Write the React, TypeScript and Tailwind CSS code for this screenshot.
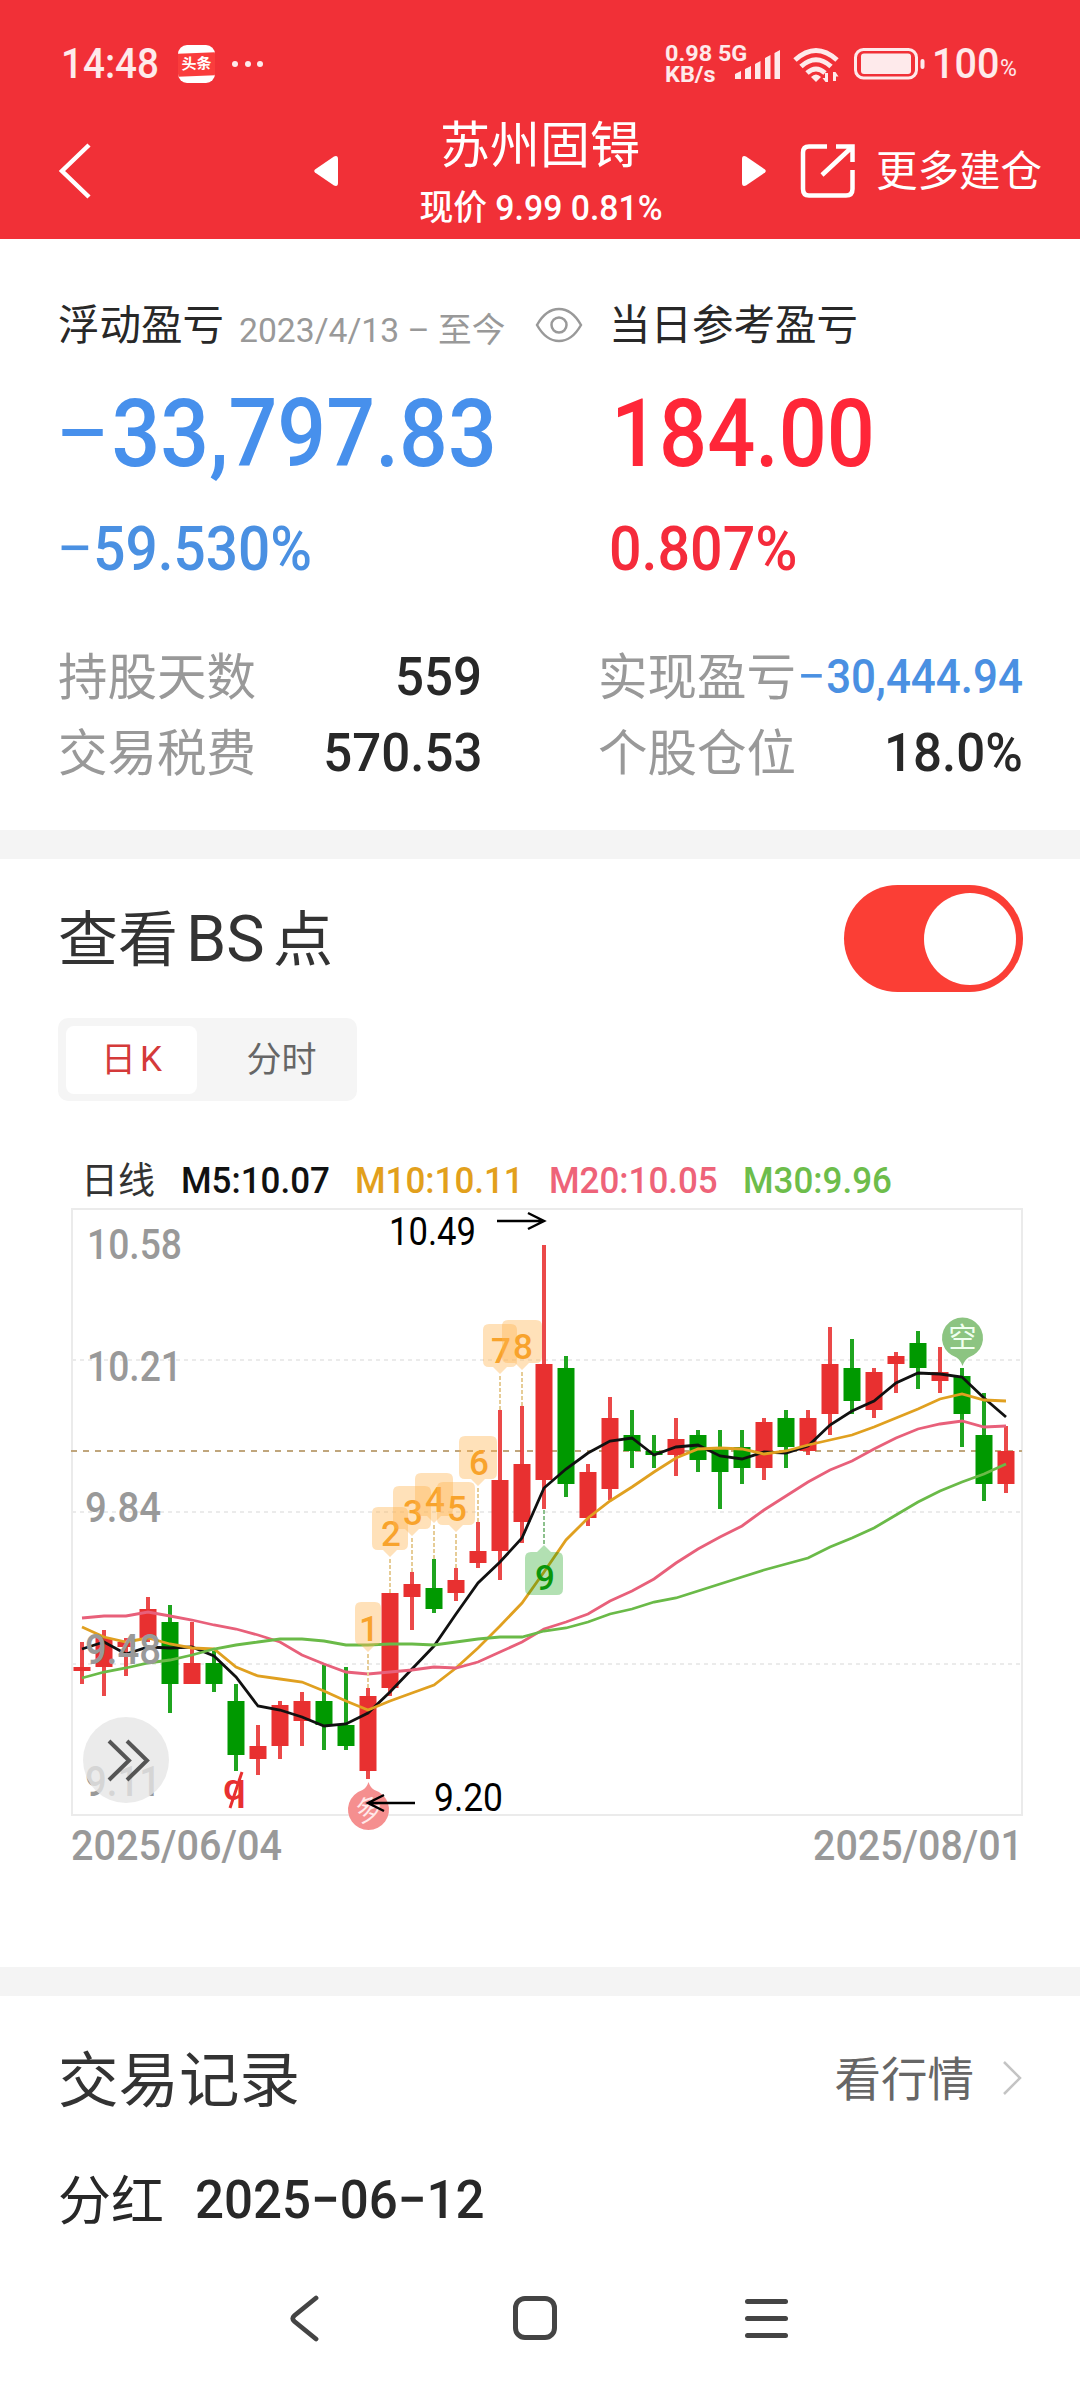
import React, { useState } from 'react';

type Candle = [number, number, number, number, number];

// [up, high, low, bodyTop, bodyBottom] in chart units
const CANDLES: Candle[] = [
  [1, 1642, 1684, 1667, 1671], [1, 1630, 1696, 1638, 1667], [1, 1638, 1676, 1642, 1647], [1, 1597, 1642, 1609, 1638],
  [0, 1605, 1713, 1622, 1684], [1, 1622, 1684, 1663, 1684], [0, 1651, 1692, 1663, 1684], [0, 1684, 1771, 1701, 1755],
  [1, 1725, 1775, 1746, 1759], [1, 1701, 1759, 1705, 1746], [1, 1692, 1746, 1701, 1721], [0, 1665, 1750, 1701, 1725],
  [0, 1667, 1750, 1725, 1746], [1, 1688, 1779, 1696, 1771], [1, 1593, 1696, 1593, 1688], [1, 1572, 1630, 1584, 1597],
  [0, 1559, 1613, 1588, 1609], [1, 1568, 1601, 1580, 1593], [1, 1522, 1568, 1551, 1563], [1, 1410, 1580, 1480, 1551],
  [1, 1406, 1543, 1464, 1522], [1, 1245, 1509, 1364, 1480], [0, 1356, 1497, 1368, 1484], [1, 1464, 1526, 1472, 1518],
  [1, 1397, 1500, 1418, 1489], [0, 1410, 1468, 1435, 1451], [0, 1435, 1468, 1451, 1455], [1, 1418, 1476, 1439, 1455],
  [0, 1430, 1472, 1435, 1460], [0, 1430, 1509, 1447, 1472], [0, 1430, 1484, 1447, 1468], [1, 1418, 1480, 1422, 1468],
  [0, 1410, 1468, 1418, 1447], [1, 1410, 1455, 1418, 1451], [1, 1327, 1435, 1364, 1414], [0, 1339, 1414, 1368, 1401],
  [1, 1368, 1418, 1372, 1410], [1, 1352, 1393, 1356, 1364], [0, 1331, 1389, 1343, 1368], [1, 1347, 1393, 1372, 1381],
  [0, 1368, 1447, 1376, 1414], [0, 1393, 1501, 1435, 1484], [1, 1426, 1493, 1451, 1484],
];

const AVERAGES = [
  {
    color: '#111111',
    values: [1649, 1642, 1654, 1647, 1648, 1647, 1656, 1677, 1706, 1710, 1717, 1726, 1724, 1713, 1692, 1669, 1646, 1614, 1583, 1562, 1538, 1488, 1469, 1453, 1441, 1438, 1455, 1447, 1445, 1456, 1459, 1452, 1453, 1446, 1425, 1411, 1401, 1383, 1373, 1374, 1377, 1398, 1417],
  },
  {
    color: '#e0a020',
    values: [1627, 1637, 1642, 1638, 1644, 1648, 1649, 1667, 1676, 1679, 1682, 1691, 1701, 1710, 1701, 1693, 1685, 1668, 1648, 1626, 1603, 1572, 1540, 1518, 1501, 1487, 1472, 1458, 1449, 1448, 1449, 1454, 1451, 1445, 1440, 1435, 1427, 1418, 1409, 1399, 1394, 1400, 1401],
  },
  {
    color: '#e8607a',
    values: [1618, 1616, 1616, 1612, 1616, 1620, 1625, 1629, 1635, 1642, 1655, 1664, 1672, 1674, 1672, 1670, 1667, 1668, 1662, 1652, 1642, 1629, 1622, 1614, 1601, 1591, 1579, 1563, 1549, 1537, 1526, 1510, 1496, 1482, 1470, 1461, 1449, 1438, 1429, 1424, 1421, 1427, 1426],
  },
  {
    color: '#6aba48',
    values: [1678, 1672, 1668, 1663, 1660, 1655, 1649, 1645, 1642, 1639, 1639, 1641, 1645, 1645, 1644, 1644, 1645, 1642, 1639, 1637, 1637, 1631, 1628, 1622, 1614, 1609, 1602, 1598, 1591, 1584, 1577, 1570, 1564, 1558, 1547, 1538, 1528, 1515, 1502, 1491, 1482, 1474, 1464],
  },
];

// label, centre index, left, width, top, end of the dashed stem
const BADGES: [string, number, number, number, number, number][] = [
  ['1', 13, 355, 26, 1602, 1688],
  ['2', 14, 372, 36, 1507, 1593],
  ['3', 15, 393, 38, 1486, 1572],
  ['4', 16, 415, 38, 1473, 1559],
  ['5', 17, 437, 38, 1482, 1568],
  ['6', 18, 459, 38, 1436, 1522],
  ['7', 19, 483, 34, 1324, 1410],
  ['8', 20, 502, 40, 1320, 1406],
];

const AXIS: [string, number, number, number][] = [
  ['10.58', 87, 1259, 95],
  ['10.21', 87, 1381, 95],
  ['9.84', 85, 1522, 76],
];

const LEGEND = [
  { text: 'M5:10.07', className: 'w-[174px] text-[#111111]' },
  { text: 'M10:10.11', className: 'w-[194px] text-[#e2a01c]' },
  { text: 'M20:10.05', className: 'w-[194px] text-[#ee6379]' },
  { text: 'M30:9.96', className: 'text-[#6dbd4b]' },
];

const cx = (i: number) => 82 + i * 22;

const Minus: React.FC = () => (
  <span className="-ml-[.04em] mr-[.09em] inline-block origin-left scale-x-[1.15] font-normal">−</span>
);

const StatusBar: React.FC = () => (
  <div className="flex h-[128px] items-center pl-[61px] text-white/90">
    <span className="w-[117px] shrink-0 whitespace-nowrap text-[42px] font-medium leading-none"><span className="inline-block origin-left scale-x-[.92]">14:48</span></span>
    <span className="flex h-[38px] w-[37px] shrink-0 flex-col justify-center overflow-hidden rounded-[9px] bg-white">
      <span className="flex h-[23px] -skew-y-2 items-center justify-center bg-[#fa3c3c] text-[15px] font-bold leading-none text-white">头条</span>
    </span>
    <span className="ml-[17px] flex gap-[6.5px]">
      <i className="size-[6px] rounded-full bg-white/90" />
      <i className="size-[6px] rounded-full bg-white/90" />
      <i className="size-[6px] rounded-full bg-white/90" />
    </span>
    <span className="ml-[402px] flex w-[70px] shrink-0 flex-col whitespace-nowrap text-[22.5px] font-bold leading-[21px]">
      <span className="origin-left scale-x-[1.04]">0.98 5G</span>
      <span className="origin-left scale-x-[1.04]">KB/s</span>
    </span>
    <svg className="h-[38px] w-[106px] shrink-0" viewBox="736 45 106 38" fill="currentColor">
      <path d="M736 74l6-3v8h-6zM746 69l6-3v13h-6zM756 64l5.500-3v18H756zM766 58l5.500-3v24H766zM775.500 53l5.500-3v29h-5.500z" />
      <g fill="none" stroke="currentColor" strokeWidth="5">
        <path d="M796 60q21-19 42 0" />
        <path d="M802 66.500q15-13.500 30 0" />
        <path d="M808 73q9-8 18 0" />
      </g>
      <path d="M812 77q5-5 10 0l-5 5z" />
      <path d="M829 73v9h-2.500l-3-4h2.500v-5zM834 81v-9h2.500l3 4.500H837V81z" />
    </svg>
    <svg className="ml-[13px] h-[38px] w-[72px] shrink-0" viewBox="855 45 72 38">
      <rect x="856.500" y="49.500" width="61" height="28.500" rx="8" fill="none" stroke="currentColor" strokeWidth="3" />
      <rect x="862" y="53.500" width="50" height="20.500" rx="3" fill="currentColor" />
      <rect x="921.500" y="59" width="4" height="10" rx="2" fill="currentColor" />
    </svg>
    <span className="ml-[6px] w-[68px] text-[42px] font-medium leading-none"><span className="inline-block origin-left scale-x-[.94]">100</span></span>
    <span className="mt-[8px] text-[23px] leading-none">%</span>
  </div>
);

const Header: React.FC = () => (
  <header className="h-[239px] bg-[#f13037] text-white">
    <StatusBar />
    <div className="flex h-[86px] items-center">
      <svg className="ml-[58px] h-[60px] w-[36px]" viewBox="0 0 36 60" fill="none" stroke="currentColor" strokeWidth="4.500">
        <path d="M31 4L4 30l27 26" />
      </svg>
      <svg className="ml-[220px] h-[30px] w-[24px]" viewBox="0 0 24 30" fill="currentColor">
        <path d="M1 13.500Q-.5 15 1 16.500L20 29.500Q24 31 24 27V3Q24-1 20 .5Z" />
      </svg>
      <div className="mt-[14px] flex w-[404px] flex-col items-center whitespace-nowrap">
        <h1 className="h-[62px] text-[50px] leading-[60px]">苏州固锝</h1>
        <p className="h-[62px] pl-[1px] text-[35px] font-medium leading-[62px]">
          <span className="inline-block scale-x-[.965]">现价 9.99 0.81%</span>
        </p>
      </div>
      <svg className="h-[30px] w-[24px]" viewBox="0 0 24 30" fill="currentColor">
        <path d="M23 13.500Q24.500 15 23 16.500L4 29.500Q0 31 0 27V3Q0-1 4 .5Z" />
      </svg>
      <svg className="ml-[33px] h-[58px] w-[58px]" viewBox="0 0 58 58" fill="none" stroke="currentColor" strokeWidth="4.500">
        <path d="M28 4.500H10Q4 4.500 4 10.500V47Q4 53.500 10 53.500H47Q53.500 53.500 53.500 47V28" />
        <path d="M37 4.500H53.500V20M52 6L23 33" />
      </svg>
      <span className="mt-[2px] ml-[19px] whitespace-nowrap text-[41.5px] leading-none">更多建仓</span>
    </div>
  </header>
);

const Stat: React.FC<{ label: string; value: React.ReactNode; className?: string }> = ({ label, value, className }) => (
  <div className="flex h-[76px] items-center whitespace-nowrap">
    <span className="mt-[3px] shrink-0 text-[49.5px] leading-none text-[#999999]">{label}</span>
    <span className="flex min-w-0 flex-1 justify-end">
      <span className={`shrink-0 origin-right leading-none font-medium ${className || 'scale-x-[.945] text-[54px] text-[#282828]'}`}>{value}</span>
    </span>
  </div>
);

const Summary: React.FC = () => (
  <section className="h-[591px] pt-[51px] pl-[58px]">
    <div className="flex h-[72px] items-center whitespace-nowrap text-[41.5px] leading-none text-[#282828]">
      <span className="w-[181px]">浮动盈亏</span>
      <span className="mt-[8px] w-[296px] text-[34px] text-[#999999]"><span className="inline-block origin-left scale-x-[.99]">2023/4/13 – 至今</span></span>
      <svg className="-mt-[3px] h-[36px] w-[48px] shrink-0" viewBox="0 0 48 36" fill="none" stroke="#999999" strokeWidth="2.500">
        <path d="M2 18Q11 2 24 2T46 18Q37 34 24 34T2 18Z" />
        <circle cx="24" cy="18" r="7.500" />
      </svg>
      <span className="ml-[26px]">当日参考盈亏</span>
    </div>
    <div className="mt-[24px] flex h-[96px] items-center whitespace-nowrap text-[94px] font-medium leading-none">
      <span className="w-[553px] text-[#4790ec]"><span className="inline-block origin-left scale-x-[.915]"><Minus />33,797.83</span></span>
      <span className="text-[#ff2638]"><span className="inline-block origin-left scale-x-[.9]">184.00</span></span>
    </div>
    <div className="mt-[31px] flex h-[72px] items-center whitespace-nowrap text-[62px] font-medium leading-none">
      <span className="w-[551px] text-[#4a90e2]"><span className="inline-block origin-left scale-x-[.915]"><Minus />59.530%</span></span>
      <span className="text-[#f52b3b]"><span className="inline-block origin-left scale-x-[.925]">0.807%</span></span>
    </div>
    <div className="mt-[54px] grid grid-cols-[424px_425px] gap-x-[116px]">
      <Stat label="持股天数" value="559" />
      <Stat label="实现盈亏" value={<><Minus />30,444.94</>} className="scale-x-[.915] text-[48px] text-[#4a90e2]" />
      <Stat label="交易税费" value="570.53" />
      <Stat label="个股仓位" value="18.0%" />
    </div>
  </section>
);

const Label: React.FC<{ x: number; y: number; w: number; text: string; fill?: string; size?: number; weight?: number }> = ({ x, y, w, text, fill = '#999999', size = 42, weight = 500 }) => (
  <text x={x} y={y} textLength={w} lengthAdjust="spacingAndGlyphs" fill={fill} fontSize={size} fontWeight={weight}>{text}</text>
);

const KLineChart: React.FC = () => (
  <svg className="block h-[670px] w-[1080px]" viewBox="0 1205 1080 670">
    <g fill="none" stroke="#ebebeb" strokeWidth="2">
      <rect x="72" y="1209" width="950" height="606" />
      <path d="M72 1360H1022M72 1512H1022M72 1664H1022" strokeDasharray="4 4" />
    </g>
    <path d="M71 1451H1022" stroke="#c0a67c" strokeWidth="2" strokeDasharray="6 6" />

    {CANDLES.map(([up, high, low, top, bottom], i) => (
      <g key={i} fill={up ? '#e83030' : '#009900'}>
        <rect x={cx(i) - 2} y={high} width="4" height={low - high} opacity=".88" />
        <rect x={cx(i) - 8.5} y={top} width="17" height={bottom - top} />
      </g>
    ))}

    {AVERAGES.map(({ color, values }) => (
      <polyline key={color} points={values.map((v, i) => `${cx(i)},${v}`).join(' ')} fill="none" stroke={color} strokeWidth="2.800" />
    ))}

    {BADGES.map(([label, i, x, w, y, end]) => (
      <g key={label}>
        <path d={`M${cx(i)} ${y + 52}V${end}`} stroke="#e6cc96" strokeWidth="2" strokeDasharray="4 2" />
        <path
          d={`M${x + 6} ${y}h${w - 12}q6 0 6 6v31q0 6-6 6H${cx(i) + 7}l-7 7l-7-7H${x + 6}q-6 0-6-6v-31q0-6 6-6z`}
          fill="#ffb450"
          fillOpacity=".4"
        />
        <text x={cx(i) + 1} y={y + 39} textAnchor="middle" fill="#f8a32c" fontSize="35" fontWeight="500">{label}</text>
      </g>
    ))}

    <path d="M544 1510V1545" stroke="#8cc08c" strokeWidth="2" strokeDasharray="4 2" />
    <path d="M531 1552h6l7-7l7 7h6q6 0 6 6v31q0 6-6 6h-26q-6 0-6-6v-31q0-6 6-6z" fill="#009900" fillOpacity=".3" />
    <text x="545" y="1590" textAnchor="middle" fill="#0a960a" fontSize="35" fontWeight="500">9</text>

    {AXIS.map(([text, x, y, w]) => <Label key={text} text={text} x={x} y={y} w={w} />)}
    <Label text="9.48" x={85} y={1664} w={76} />
    <Label text="9.11" x={85} y={1796} w={76} />

    <circle cx="126" cy="1760" r="43" fill="#e6e6e6" fillOpacity=".78" />
    <path d="M109 1741l20 19.500l-20 19.500M127 1741l20 19.500l-20 19.500" fill="none" stroke="#555555" strokeWidth="4" />

    <Label text="q" x={223} y={1800} w={23} fill="#e83030" size={37} />
    <path d="M242 1772L230 1808" stroke="#e83030" strokeWidth="3" />

    <path d="M368.500 1782q2 6 6 8a20.500 20.500 0 1 1-12 0q4-2 6-8z" fill="#f58f8f" />
    <text x="369" y="1819" textAnchor="middle" fill="#ffe9e9" fontSize="27" transform="rotate(-20 369 1810)">多</text>
    <path d="M368 1803H415M384 1795L368 1803L384 1811" fill="none" stroke="#000000" strokeWidth="2.500" />
    <Label text="9.20" x={434} y={1811} w={69} fill="#000000" size={38} weight={400} />

    <path d="M497 1221H544M528 1213L544 1221L528 1229" fill="none" stroke="#000000" strokeWidth="2.500" />
    <Label text="10.49" x={389} y={1245} w={87} fill="#000000" size={38} weight={400} />

    <path d="M962.500 1366q-2-6-6-8.500a20.500 20.500 0 1 1 12 0q-4 2.500-6 8.500z" fill="#8cc481" />
    <text x="962.500" y="1348" textAnchor="middle" fill="#f0fff0" fontSize="28">空</text>

    <Label text="2025/06/04" x={71} y={1860} w={211} />
    <Label text="2025/08/01" x={813} y={1860} w={210} />
  </svg>
);

const BsPoints: React.FC = () => {
  const [on, setOn] = useState(true);
  return (
    <section className="h-[1108px]">
      <div className="flex h-[159px] items-center justify-between pr-[57px] pl-[58px]">
        <h2 className="flex items-center whitespace-nowrap text-[60px] leading-none text-[#333333]">
          <span className="mt-[5px]">查看</span>
          <span className="mt-[2px] mr-[1px] ml-[8px] w-[86px] text-[64px]"><span className="inline-block origin-left scale-x-[1.01]">BS</span></span>
          <span className="mt-[5px]">点</span>
        </h2>
        <button onClick={() => setOn(!on)} className={`flex h-[107px] w-[179px] items-center rounded-full px-[7px] ${on ? 'justify-end bg-[#fb3e35]' : 'bg-gray-300'}`}>
          <span className="size-[92px] rounded-full bg-white" />
        </button>
      </div>
      <div className="ml-[58px] flex h-[83px] w-[299px] items-center rounded-[10px] bg-[#f5f5f5] pl-[8px] text-[35px] leading-none">
        <span className="flex h-[68px] w-[131px] items-center justify-center gap-[4px] rounded-[8px] bg-white text-[#d43a3a]"><span className="mt-[2px]">日</span><span>K</span></span>
        <span className="mt-[2px] flex-1 pl-[9px] text-center text-[#666666]">分时</span>
      </div>
      <div className="mt-[56px] flex h-[46px] items-center whitespace-nowrap pl-[81px] text-[37px] font-medium leading-none">
        <span className="mt-[2px] w-[100px] font-normal text-[#333333]">日线</span>
        {LEGEND.map(({ text, className }) => (
          <span key={text} className={className}><span className="inline-block origin-left scale-x-[.945]">{text}</span></span>
        ))}
      </div>
      <div className="mt-[2px]">
        <KLineChart />
      </div>
    </section>
  );
};

const Records: React.FC = () => (
  <section className="h-[264px] pt-[41px] pr-[57px] pl-[58px]">
    <div className="flex h-[86px] items-center whitespace-nowrap leading-none">
      <h2 className="mt-[4px] flex-1 text-[60.5px] text-[#333333]">交易记录</h2>
      <span className="text-[46.5px] text-[#666666]">看行情</span>
      <svg className="-mt-[4px] ml-[28px] h-[36px] w-[21px]" viewBox="0 0 21 36" fill="none" stroke="#c4c4c4" strokeWidth="2.500">
        <path d="M2 2l16 16L2 34" />
      </svg>
    </div>
    <div className="mt-[36px] flex h-[82px] items-center whitespace-nowrap leading-none text-[#282828]">
      <span className="mt-[4px] w-[137px] text-[53px]">分红</span>
      <span className="origin-left scale-x-[.945] text-[54px] font-medium">2025−06−12</span>
    </div>
  </section>
);

const NavBar: React.FC = () => (
  <nav className="flex h-[116px] items-center pl-[286px] text-[#444444]">
    <svg className="h-[48px] w-[34px]" viewBox="0 0 34 48" fill="none" stroke="currentColor" strokeWidth="4.800" strokeLinecap="round">
      <path d="M30 4L8.500 21.500Q5 24.500 8.500 27.500L30 45" />
    </svg>
    <i className="ml-[193px] size-[44px] rounded-[12px] border-[5px] border-current" />
    <div className="ml-[188px] flex w-[43px] flex-col gap-[12px]">
      <i className="h-[5px] rounded-full bg-current" />
      <i className="h-[5px] rounded-full bg-current" />
      <i className="h-[5px] rounded-full bg-current" />
    </div>
  </nav>
);

const App: React.FC = () => (
  <div className="h-[2400px] w-[1080px] overflow-hidden bg-white font-['Roboto','Noto_Sans_CJK_SC',sans-serif]">
    <Header />
    <Summary />
    <div className="h-[29px] bg-[#f4f4f4]" />
    <BsPoints />
    <div className="h-[29px] bg-[#f4f4f4]" />
    <Records />
    <NavBar />
  </div>
);

export default App;
